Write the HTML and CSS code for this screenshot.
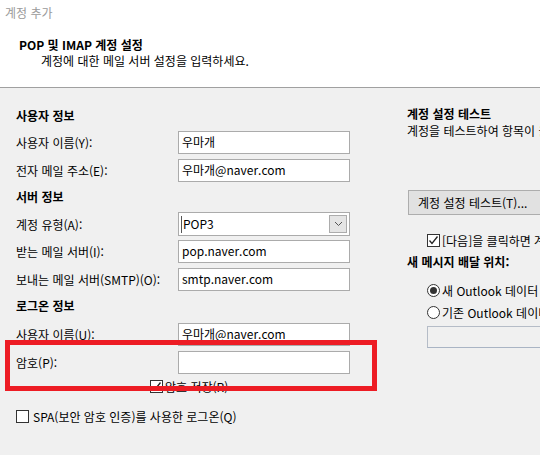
FILE: index.html
```html
<!DOCTYPE html>
<html lang="ko">
<head>
<meta charset="utf-8">
<title>계정 추가</title>
<link rel="stylesheet" href="styles.css">
</head>
<body>
<div class="window">
  <header class="top">
    <div class="wtitle">계정 추가</div>
    <div class="ptitle">POP 및 IMAP 계정 설정</div>
    <div class="psub">계정에 대한 메일 서버 설정을 입력하세요.</div>
  </header>
  <main class="main">
    <section class="left">
      <div class="heading">사용자 정보</div>
      <div class="field"><span>사용자 이름(Y):</span><div class="input">우마개</div></div>
      <div class="field"><span>전자 메일 주소(E):</span><div class="input">우마개@naver.com</div></div>
      <div class="heading">서버 정보</div>
      <div class="field"><span>계정 유형(A):</span>
        <div class="input select"><span class="caret"></span><span class="sel-text">POP3</span>
          <span class="drop"><svg width="9" height="6" viewBox="0 0 9 6"><polyline points="1,1 4.5,4.5 8,1" fill="none" stroke="#555" stroke-width="1"/></svg></span>
        </div>
      </div>
      <div class="field"><span>받는 메일 서버(I):</span><div class="input">pop.naver.com</div></div>
      <div class="field"><span>보내는 메일 서버(SMTP)(O):</span><div class="input">smtp.naver.com</div></div>
      <div class="heading login">로그온 정보</div>
      <div class="field"><span>사용자 이름(U):</span><div class="input">우마개@naver.com</div></div>
      <div class="field"><span>암호(P):</span><div class="input"></div></div>
      <div class="check-row save">
        <span class="cb"><svg width="11" height="11" viewBox="0 0 11 11"><polyline points="1.5,5.5 4,8.5 9.5,1.5" fill="none" stroke="#222" stroke-width="1.3"/></svg></span>
        <span>암호 저장(R)</span>
      </div>
      <div class="check-row spa">
        <span class="cb"></span>
        <span>SPA(보안 암호 인증)를 사용한 로그온(Q)</span>
      </div>
    </section>
    <section class="right">
      <div class="rheading">계정 설정 테스트</div>
      <div class="rdesc">계정을 테스트하여 항목이 올바른지 확인하는 것이 좋습니다.</div>
      <div class="btn">계정 설정 테스트(T)...</div>
      <div class="check-row auto">
        <span class="cb"><svg width="11" height="11" viewBox="0 0 11 11"><polyline points="1.5,5.5 4,8.5 9.5,1.5" fill="none" stroke="#222" stroke-width="1.3"/></svg></span>
        <span>[다음]을 클릭하면 계정 설정 자동 테스트(S)</span>
      </div>
      <div class="rheading deliver">새 메시지 배달 위치:</div>
      <div class="radio-row first"><span class="radio on"></span><span>새 Outlook 데이터 파일(W)</span></div>
      <div class="radio-row"><span class="radio"></span><span>기존 Outlook 데이터 파일(X)</span></div>
      <div class="path-box"></div>
    </section>
  </main>
  <div class="highlight"></div>
</div>
</body>
</html>
```

FILE: styles.css
```css
* { box-sizing: border-box; }
html, body {
  margin: 0;
  padding: 0;
  width: 540px;
  height: 455px;
  overflow: hidden;
  background: #f0f0f0;
}
body {
  font-family: "Noto Sans CJK KR", "Noto Sans", sans-serif;
  font-size: 12px;
  color: #000;
}
.window {
  position: relative;
  width: 540px;
  height: 455px;
  overflow: hidden;
}
.top {
  height: 88px;
  background: #fff;
  border-bottom: 1px solid #a0a0a0;
  padding-top: 5px;
}
.wtitle {
  padding-left: 5px;
  line-height: 16px;
  color: #9a9a9a;
}
.ptitle {
  margin-top: 16px;
  padding-left: 19px;
  line-height: 16px;
  font-weight: bold;
}
.psub {
  padding-left: 41px;
  line-height: 16px;
}
.main {
  display: flex;
  gap: 57px;
  padding-left: 16px;
}
.left {
  flex: 0 0 333px;
  padding-top: 18px;
}
.heading {
  line-height: 20px;
  font-weight: bold;
  margin-bottom: 5px;
}
.heading.login { margin-bottom: 7px; }
.field {
  display: grid;
  grid-template-columns: 162px 172px;
  align-items: center;
  height: 23px;
  margin-bottom: 5px;
  white-space: nowrap;
}
.input {
  height: 23px;
  background: #fff;
  border: 1px solid #ababab;
  padding-left: 3px;
  line-height: 20px;
  white-space: nowrap;
  overflow: hidden;
}
.select {
  display: flex;
  align-items: center;
  padding-left: 2px;
  height: 24px;
}
.caret {
  width: 1px;
  height: 17px;
  background: #555;
  margin-right: 1px;
}
.sel-text { flex: 1; }
.drop {
  width: 18px;
  height: 18px;
  margin-right: 2px;
  background: #e5e5e5;
  border: 1px solid #acacac;
  display: flex;
  align-items: center;
  justify-content: center;
}
.check-row {
  display: flex;
  align-items: center;
  gap: 2px;
  height: 14px;
  white-space: nowrap;
}
.check-row.save { padding-left: 134px; margin-top: 0; }
.check-row.spa { margin-top: 16px; gap: 4px; }
.cb {
  width: 13px;
  height: 13px;
  flex: 0 0 13px;
  background: #fff;
  border: 1px solid #333;
  display: flex;
  align-items: center;
  justify-content: center;
}
.right {
  flex: 0 0 auto;
  padding-top: 17px;
  white-space: nowrap;
}
.rheading {
  line-height: 18px;
  font-weight: bold;
}
.rdesc { line-height: 16px; }
.btn {
  margin-top: 51px;
  margin-left: 1px;
  width: 160px;
  height: 25px;
  background: #e1e1e1;
  border: 1px solid #adadad;
  padding-left: 9px;
  line-height: 23px;
}
.check-row.auto {
  margin-top: 17px;
  padding-left: 20px;
  height: 16px;
}
.rheading.deliver { margin-top: 5px; }
.radio-row {
  display: flex;
  align-items: center;
  gap: 2px;
  height: 18px;
  margin-top: 4px;
  padding-left: 20px;
}
.radio-row.first { margin-top: 10px; }
.radio {
  width: 13px;
  height: 13px;
  border-radius: 50%;
  border: 1px solid #333;
  background: #fff;
  display: flex;
  align-items: center;
  justify-content: center;
}
.radio.on::after {
  content: "";
  width: 7px;
  height: 7px;
  border-radius: 50%;
  background: #333;
}
.path-box {
  margin-top: 5px;
  margin-left: 20px;
  width: 200px;
  height: 22px;
  border: 1px solid #b5bcc7;
  border-bottom-color: #a9b4c4;
  background: #f0f0f0;
}
.highlight {
  position: absolute;
  left: 5px;
  top: 340px;
  width: 372px;
  height: 51px;
  border: 5px solid #ed1c24;
}
```
